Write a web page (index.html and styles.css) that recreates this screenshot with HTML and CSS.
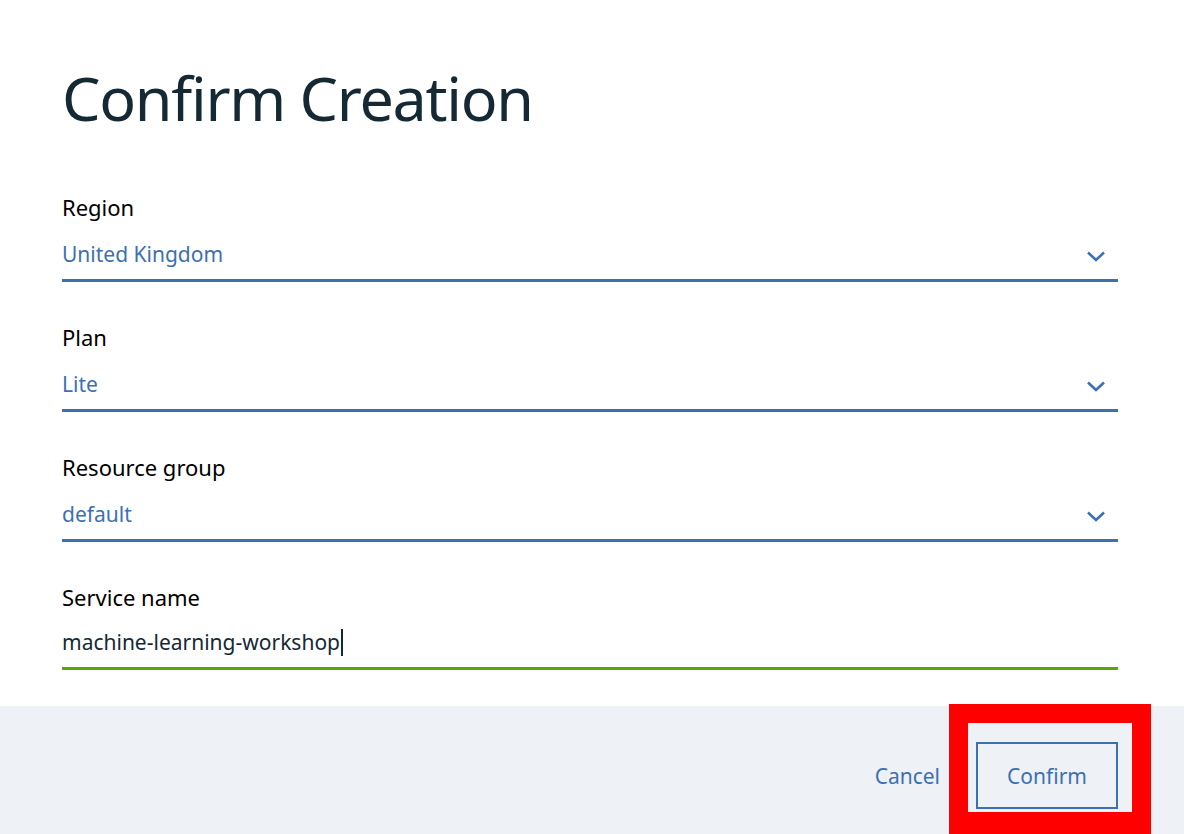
FILE: index.html
```html
<!DOCTYPE html>
<html lang="en">
<head>
<meta charset="utf-8">
<title>Confirm Creation</title>
<link rel="stylesheet" href="styles.css">
</head>
<body>
<div class="modal">
  <div class="content">
    <h1 class="title">Confirm Creation</h1>
    <div class="field">
      <div class="label">Region</div>
      <div class="select">
        <span class="value">United Kingdom</span>
        <svg class="chevron" width="18" height="11" viewBox="0 0 18 11"><path d="M1 1.5 L9 9 L17 1.5" fill="none" stroke="#3d70b2" stroke-width="2.6"/></svg>
      </div>
    </div>
    <div class="field">
      <div class="label">Plan</div>
      <div class="select">
        <span class="value">Lite</span>
        <svg class="chevron" width="18" height="11" viewBox="0 0 18 11"><path d="M1 1.5 L9 9 L17 1.5" fill="none" stroke="#3d70b2" stroke-width="2.6"/></svg>
      </div>
    </div>
    <div class="field">
      <div class="label">Resource group</div>
      <div class="select">
        <span class="value">default</span>
        <svg class="chevron" width="18" height="11" viewBox="0 0 18 11"><path d="M1 1.5 L9 9 L17 1.5" fill="none" stroke="#3d70b2" stroke-width="2.6"/></svg>
      </div>
    </div>
    <div class="field field-input">
      <div class="label">Service name</div>
      <div class="input"><span class="input-text">machine-learning-workshop</span><span class="caret"></span></div>
    </div>
  </div>
  <div class="footer">
    <button class="btn-link">Cancel</button>
    <button class="btn-secondary">Confirm</button>
  </div>
</div>
<div class="highlight"></div>
</body>
</html>
```

FILE: styles.css
```css
html, body {
  margin: 0;
  padding: 0;
  height: 834px;
  overflow: hidden;
  background: #ffffff;
}
body {
  font-family: "Noto Sans", "Open Sans", sans-serif;
  color: #152935;
  position: relative;
}
.modal {
  display: flex;
  flex-direction: column;
  height: 834px;
}
.content {
  padding: 58px 66px 0 62px;
}
.title {
  margin: 0;
  font-size: 61px;
  line-height: 80px;
  font-weight: 400;
  letter-spacing: -1.3px;
  color: #152935;
}
.field {
  margin-top: 41px;
  display: flex;
  flex-direction: column;
}
.title + .field {
  margin-top: 55px;
}
.label {
  font-size: 22px;
  line-height: 28px;
  color: #000000;
}
.select {
  margin-top: 19px;
  display: flex;
  justify-content: space-between;
  align-items: flex-start;
  padding-bottom: 11px;
  border-bottom: 3px solid #3d70b2;
}
.value {
  font-size: 21px;
  line-height: 28px;
  color: #3d70b2;
}
.chevron {
  margin-top: 11px;
  margin-right: 13px;
}
.input {
  margin-top: 17px;
  display: flex;
  align-items: center;
  padding-bottom: 11px;
  border-bottom: 3px solid #5aa700;
  font-size: 21px;
  line-height: 28px;
  color: #152935;
}
.caret {
  display: inline-block;
  width: 2px;
  height: 27px;
  background: #152935;
  margin-left: 1px;
}
.footer {
  margin-top: 36px;
  flex: 1;
  background: #eef1f5;
  display: flex;
  justify-content: flex-end;
  align-items: flex-start;
  gap: 36px;
  padding: 36px 66px 0 0;
}
.btn-link, .btn-secondary {
  font-family: "Noto Sans", "Open Sans", sans-serif;
  font-size: 21px;
  color: #3d70b2;
  background: transparent;
  cursor: pointer;
  height: 67px;
  margin: 0;
}
.btn-link {
  border: none;
  padding: 0;
}
.btn-secondary {
  width: 142px;
  border: 2px solid #3d70b2;
  padding: 0;
}
.highlight {
  position: absolute;
  left: 949px;
  top: 704px;
  width: 202px;
  height: 130px;
  box-sizing: border-box;
  border: 19px solid #ff0000;
  border-bottom-width: 22px;
}
```
